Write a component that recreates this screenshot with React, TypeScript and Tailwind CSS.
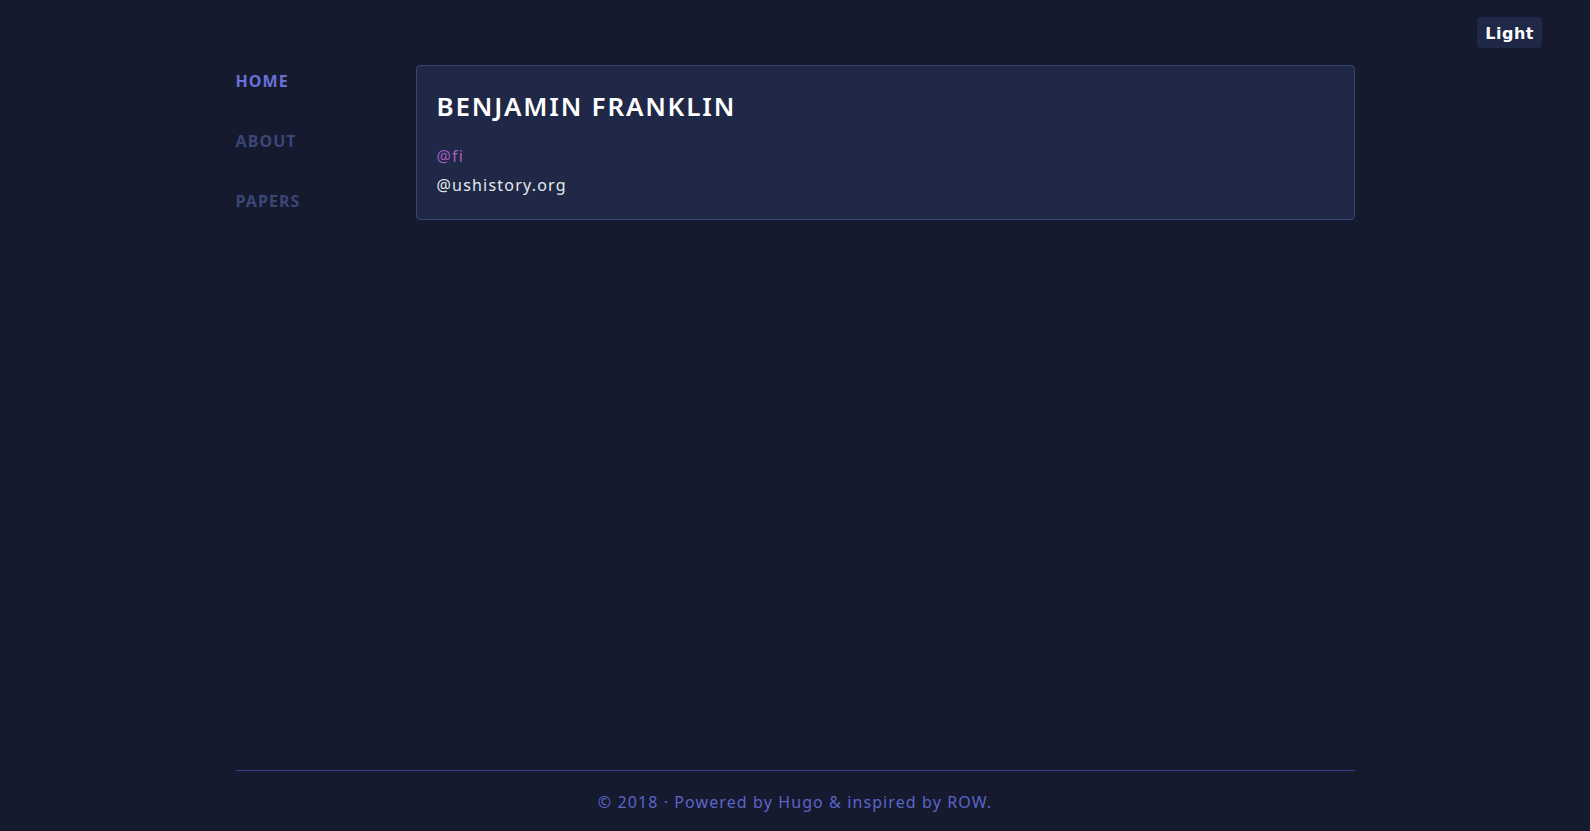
const navItems = [
  { label: "HOME", active: true },
  { label: "ABOUT", active: false },
  { label: "PAPERS", active: false },
];

export default function App() {
  return (
    <div
      className="min-h-screen flex flex-col bg-[#151a2e] text-white"
      style={{ fontFamily: '"Noto Sans", sans-serif' }}
    >
      <div className="flex justify-end pt-[17px] pr-[48px]">
        <button
          className="bg-[#1f2846] rounded-[4px] px-2 pt-[2px] h-[31px] text-base font-bold text-white tracking-[0.5px]"
          style={{ fontFamily: '"DejaVu Sans", sans-serif' }}
        >
          Light
        </button>
      </div>

      <div className="w-[1119px] mx-auto flex flex-1 mt-[17px]">
        <nav className="w-[180px] shrink-0">
          <ul className="flex flex-col gap-[36px] pt-[4px]">
            {navItems.map((item) => (
              <li key={item.label}>
                <a
                  href="#"
                  className={
                    "text-base font-bold tracking-[1.1px] leading-6 " +
                    (item.active ? "text-[#6a71d9]" : "text-[#3a4676]")
                  }
                >
                  {item.label}
                </a>
              </li>
            ))}
          </ul>
        </nav>

        <main className="flex-1">
          <section className="bg-[#1f2846] border border-[#374478] rounded-[4px] px-5 pt-[21px] pb-[22px]">
            <h1 className="text-[26px] leading-[39px] font-semibold tracking-[1.8px]">
              BENJAMIN FRANKLIN
            </h1>
            <p className="mt-[18px] text-base leading-6 tracking-[1.2px] text-[#a45fbf]">
              @fi
            </p>
            <p className="mt-[5px] text-base leading-6 tracking-[1.2px] text-[#e6e8f0]">
              @ushistory.org
            </p>
          </section>
        </main>
      </div>

      <footer className="w-[1119px] mx-auto border-t border-[#343f8c] pt-[19px] pb-[17px] text-center">
        <p className="text-base leading-6 tracking-[1.1px] text-[#5c64c9]">
          © 2018 · Powered by Hugo &amp; inspired by ROW.
        </p>
      </footer>
    </div>
  );
}
